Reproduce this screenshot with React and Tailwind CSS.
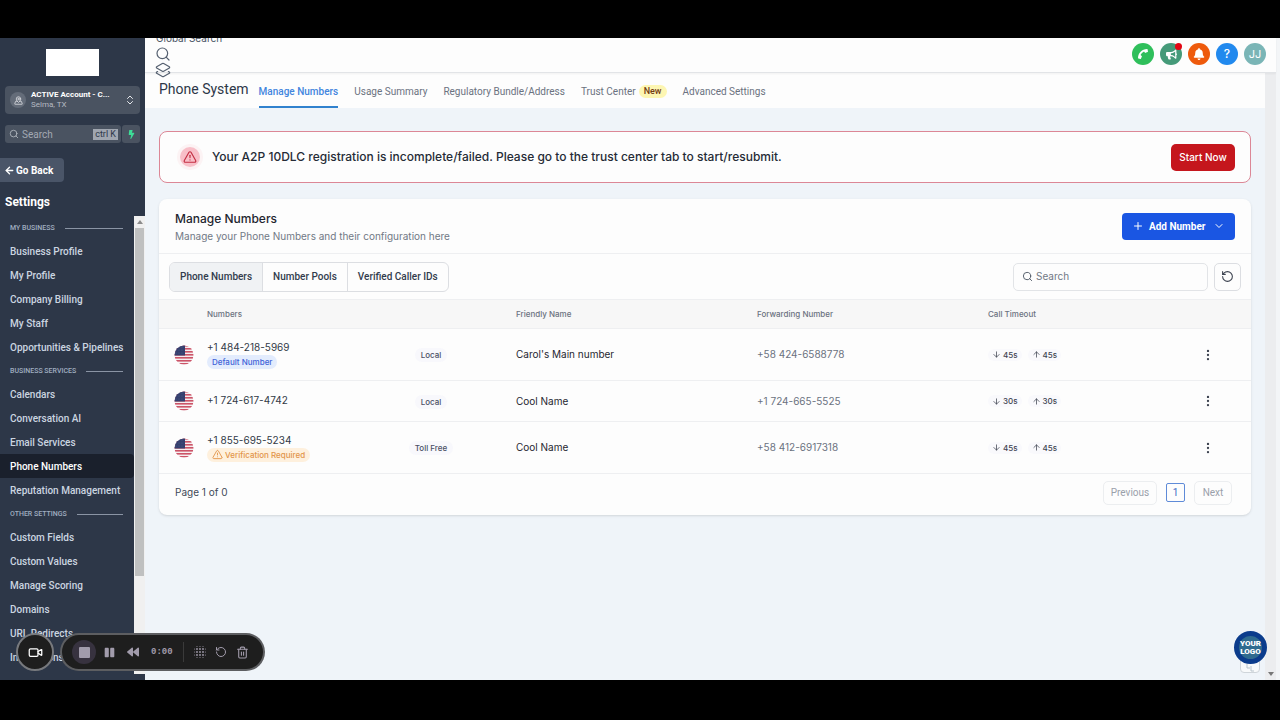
import {
  ArrowDown,
  ArrowLeft,
  ArrowUp,
  ChevronDown,
  ChevronsUpDown,
  EllipsisVertical,
  Layers2,
  MapPinned,
  Plus,
  RotateCcw,
  Search,
  Trash2,
  TriangleAlert,
  Video,
} from "lucide-react";
import { FaBackward, FaBell, FaBolt, FaBullhorn, FaPause, FaPhone } from "react-icons/fa";

const sections = [
  {
    title: "MY BUSINESS",
    items: ["Business Profile", "My Profile", "Company Billing", "My Staff", "Opportunities & Pipelines"],
  },
  {
    title: "BUSINESS SERVICES",
    items: ["Calendars", "Conversation AI", "Email Services", "Phone Numbers", "Reputation Management"],
  },
  {
    title: "OTHER SETTINGS",
    items: ["Custom Fields", "Custom Values", "Manage Scoring", "Domains", "URL Redirects", "Integrations"],
  },
];

const tabs = ["Manage Numbers", "Usage Summary", "Regulatory Bundle/Address", "Trust Center", "Advanced Settings"];

const numbers = [
  { id: 1, phone: "+1 484-218-5969", badge: "default", type: "Local", name: "Carol's Main number", forward: "+58 424-6588778", timeout: "45s", height: "h-[52px]" },
  { id: 2, phone: "+1 724-617-4742", badge: null, type: "Local", name: "Cool Name", forward: "+1 724-665-5525", timeout: "30s", height: "h-[41px]" },
  { id: 3, phone: "+1 855-695-5234", badge: "verify", type: "Toll Free", name: "Cool Name", forward: "+58 412-6917318", timeout: "45s", height: "h-[52px]" },
];

function Flag() {
  return (
    <svg viewBox="0 0 20 20" className="block size-5">
      <clipPath id="flagCircle">
        <circle cx="10" cy="10" r="9.5" />
      </clipPath>
      <g clipPath="url(#flagCircle)">
        <rect width="20" height="20" fill="#f6eef0" />
        {[0, 3, 6, 9, 12, 15, 18].map((y) => (
          <rect key={y} y={y} width="20" height="1.6" fill="#cc5468" />
        ))}
        <rect width="11" height="10.5" fill="#35406f" />
        {[2, 5, 8].map((y) =>
          [2, 5, 8].map((x) => <circle key={`${x}-${y}`} cx={x} cy={y} r="0.4" fill="#6d769e" />)
        )}
      </g>
    </svg>
  );
}

function Sidebar() {
  return (
    <aside className="flex w-[145px] shrink-0 flex-col overflow-hidden bg-[#2d3748] font-[Roboto,sans-serif]">
      <div className="mx-auto mt-[11px] h-[27px] w-[53px] shrink-0 bg-white" />

      {/* Account switcher */}
      <button className="mx-[5px] mt-[10px] flex h-7 shrink-0 items-center rounded-[4px] bg-[#4a5361] pr-1 pl-[5px] text-left">
        <span className="flex size-4 items-center justify-center rounded-full bg-[#646c79] text-gray-200">
          <MapPinned size={9} />
        </span>
        <span className="ml-[5px] flex-1 leading-[10px] whitespace-nowrap">
          <span className="block text-[8px] font-bold text-white">ACTIVE Account - C...</span>
          <span className="block text-[8px] text-[#b5bac2]">Selma, TX</span>
        </span>
        <ChevronsUpDown size={12} className="text-gray-200" />
      </button>

      {/* Quick search */}
      <div className="mx-[5px] mt-[11px] flex h-[18px] shrink-0 gap-px">
        <label className="flex min-w-0 flex-1 items-center rounded-[3px] bg-[#4a5361] pr-[3px] pl-1">
          <Search size={10} className="shrink-0 text-[#b5bac2]" />
          <input
            aria-label="Search menu"
            placeholder="Search"
            className="ml-[3px] w-full min-w-0 bg-transparent text-[10px] outline-none placeholder:text-[#a3a9b3]"
          />
          <kbd className="bg-[#a0a6b0] px-[2px] font-[Roboto,sans-serif] text-[9px] leading-[11px] whitespace-nowrap text-[#2d3748]">
            ctrl K
          </kbd>
        </label>
        <button aria-label="Quick actions" className="flex w-[18px] items-center justify-center rounded-[3px] bg-[#4a5361] text-[#3ddc97]">
          <FaBolt size={9} />
        </button>
      </div>

      <button className="mt-[15px] flex h-6 w-16 shrink-0 items-center gap-px rounded-r-[4px] bg-[#4a5568] pl-1 text-[10px] font-bold text-white">
        <ArrowLeft size={11} strokeWidth={3} />
        Go Back
      </button>

      <h2 className="mt-3 ml-[5px] shrink-0 text-[12px] leading-4 font-bold text-white">Settings</h2>

      <div className="mt-[6px] mb-[6px] flex min-h-0 flex-1">
        <nav className="flex-1 overflow-hidden">
          {sections.map((section) => (
            <div key={section.title}>
              <div className="flex h-[23px] items-center pt-[2px] pr-[11px] pl-[10px]">
                <span className="text-[7px] font-medium text-[#a0aec0]">{section.title}</span>
                <span className="ml-[10px] h-px flex-1 bg-[#8a94a4]" />
              </div>
              {section.items.map((item) => (
                <a
                  key={item}
                  href="#"
                  className={
                    item === "Phone Numbers"
                      ? "flex h-6 items-center rounded-r-[4px] bg-[#1a202c] pl-[10px] text-[10px] font-medium text-white"
                      : "flex h-6 items-center pl-[10px] text-[10px] font-medium whitespace-nowrap text-[#cbd5e0]"
                  }
                >
                  {item}
                </a>
              ))}
            </div>
          ))}
        </nav>
        {/* Scroll track */}
        <div className="flex w-[11px] flex-col items-center bg-[#f0f0f0]">
          <div className="flex h-3 items-center">
            <svg viewBox="0 0 6 4" className="h-1 w-[6px]">
              <path d="M0 4 3 0l3 4z" fill="#8b8b8b" />
            </svg>
          </div>
          <div className="h-[76%] w-[9px] bg-[#bfc0c0]" />
        </div>
      </div>
    </aside>
  );
}

function TopBar() {
  return (
    <header className="relative z-10 mr-1 flex h-[35px] shrink-0 items-start justify-between border-b border-[#e2e4e7] bg-[#fdfdfd] pr-[10px] pl-[11px] shadow-xs">
      <div className="-mt-2 text-[#556070]">
        <p className="text-[10px] leading-4 text-gray-600">Global Search</p>
        <Search size={16} strokeWidth={1.8} className="-ml-px" />
        <Layers2 size={16} strokeWidth={1.8} className="-ml-px" />
      </div>
      <div className="flex gap-[6px] pt-[5px] text-white">
        <button aria-label="Call" className="flex size-[22px] items-center justify-center rounded-full bg-[#2fbf5b]">
          <FaPhone size={10} className="rotate-180" />
        </button>
        <button aria-label="Announcements" className="relative flex size-[22px] items-center justify-center rounded-full bg-[#459a79]">
          <FaBullhorn size={11} />
          <span className="absolute top-0 right-0 size-[7px] rounded-full bg-[#e30613]" />
        </button>
        <button aria-label="Notifications" className="flex size-[22px] items-center justify-center rounded-full bg-[#ee5a0c]">
          <FaBell size={12} />
        </button>
        <button aria-label="Help" className="flex size-[22px] items-center justify-center rounded-full bg-[#2189ee] text-[12px] font-medium">
          ?
        </button>
        <button aria-label="Profile" className="flex size-[22px] items-center justify-center rounded-full bg-[#7ab5b6] text-[11px]">
          JJ
        </button>
      </div>
    </header>
  );
}

function PageTabs() {
  return (
    <div className="flex h-[35px] shrink-0 bg-[#fdfdfd] pl-[14px] font-[Roboto,sans-serif]">
      <h1 className="pt-[6px] text-[14px] leading-5 text-[#2d3748]">Phone System</h1>
      <nav className="ml-[10px] flex gap-4">
        {tabs.map((tab) => (
          <a
            key={tab}
            href="#"
            className={
              tab === "Manage Numbers"
                ? "flex items-center border-b-2 border-[#3182ce] pt-1 text-[10px] font-medium text-[#4285de]"
                : "flex items-center border-b-2 border-transparent pt-1 text-[10px] text-[#6b7280]"
            }
          >
            {tab}
            {tab === "Trust Center" && (
              <span className="ml-[3px] rounded-full bg-[#fdf6b2] px-[5px] text-[9px] leading-[13px] font-medium text-[#723b13]">New</span>
            )}
          </a>
        ))}
      </nav>
    </div>
  );
}

function Alert() {
  return (
    <div className="flex h-[52px] items-center rounded-[8px] border border-[#dc8796] bg-[#fdfdfd] pr-[15px] pl-[17px]">
      <span className="flex size-[26px] items-center justify-center rounded-full bg-[#fcf3f4]">
        <span className="flex size-5 items-center justify-center rounded-full bg-[#f8bfc8] text-[#c32e42]">
          <TriangleAlert size={14} />
        </span>
      </span>
      <p className="ml-[9px] flex-1 text-[12px] font-medium text-[#252b36]">
        Your A2P 10DLC registration is incomplete/failed. Please go to the trust center tab to start/resubmit.
      </p>
      <button className="h-[27px] w-16 rounded-[5px] bg-[#c5161d] text-[10px] font-medium text-white">Start Now</button>
    </div>
  );
}

function NumbersTable() {
  return (
    <table className="w-full table-fixed text-left text-[10px] text-[#323a46]">
      <colgroup>
        <col className="w-[48px]" />
        <col className="w-[139px]" />
        <col className="w-[170px]" />
        <col className="w-[241px]" />
        <col className="w-[231px]" />
        <col className="w-[177px]" />
        <col className="w-[86px]" />
      </colgroup>
      <thead>
        <tr className="h-[29px] border-y border-[#eeeff1] bg-[#f7f7f7] text-[8px] text-[#6b7280]">
          <th />
          <th className="font-medium">Numbers</th>
          <th />
          <th className="font-medium">Friendly Name</th>
          <th className="font-medium">Forwarding Number</th>
          <th className="font-medium">Call Timeout</th>
          <th />
        </tr>
      </thead>
      <tbody>
        {numbers.map((row) => (
          <tr key={row.id} className={`${row.height} border-b border-[#eeeff1]`}>
            <td className="pl-[15px]">
              <Flag />
            </td>
            <td className="pb-[2px] whitespace-nowrap">
              <div className="leading-[16px]">{row.phone}</div>
              {row.badge === "default" && (
                <span className="flex w-fit items-center rounded-full bg-[#e3ecfd] px-[5px] text-[8px] leading-[14px] font-medium text-[#3f62d8]">
                  Default Number
                </span>
              )}
              {row.badge === "verify" && (
                <span className="flex w-fit items-center gap-[2px] rounded-full bg-[#fef0dd] px-[5px] text-[8px] leading-[14px] font-medium text-[#e2954a]">
                  <TriangleAlert size={11} />
                  Verification Required
                </span>
              )}
            </td>
            <td className="text-center">
              <span className="rounded-full bg-[#f8f8fc] px-[6px] py-[2px] text-[8px] font-medium text-[#4b5065]">{row.type}</span>
            </td>
            <td className="text-[#1f2630]">{row.name}</td>
            <td className="text-[#6b7280]">{row.forward}</td>
            <td>
              <div className="flex gap-[6px] text-[8px] font-medium text-[#3d4350]">
                <span className="flex items-center gap-[2px] rounded-full bg-[#f9f9fc] px-1">
                  <ArrowDown size={9} />
                  {row.timeout}
                </span>
                <span className="flex items-center gap-[2px] rounded-full bg-[#f9f9fc] px-1">
                  <ArrowUp size={9} />
                  {row.timeout}
                </span>
              </div>
            </td>
            <td>
              <button aria-label="Row actions" className="mx-auto block text-[#3d4350]">
                <EllipsisVertical size={14} />
              </button>
            </td>
          </tr>
        ))}
      </tbody>
    </table>
  );
}

function NumbersCard() {
  return (
    <section className="mt-4 rounded-[8px] bg-[#fdfdfd] pb-1 shadow-sm">
      <div className="flex h-[55px] items-center justify-between border-b border-[#eeeff1] px-4">
        <div className="pt-[2px]">
          <h2 className="text-[12px] leading-[18px] font-medium text-[#1f2630]">Manage Numbers</h2>
          <p className="text-[10px] leading-4 text-[#717985]">Manage your Phone Numbers and their configuration here</p>
        </div>
        <button className="flex h-[27px] w-[113px] items-center rounded-[4px] bg-[#1a56e3] px-[10px] font-[Roboto,sans-serif] text-[10px] font-bold text-white">
          <Plus size={12} />
          <span className="ml-[5px]">Add Number</span>
          <ChevronDown size={12} className="ml-auto" />
        </button>
      </div>

      <div className="flex h-[45px] items-center px-[10px]">
        <div className="flex h-[30px] divide-x divide-[#dcdee2] overflow-hidden rounded-[6px] border border-[#dcdee2] font-[Roboto,sans-serif] text-[10px] font-medium text-[#323c4d]">
          <button className="bg-[#f0f2f4] px-[10px]">Phone Numbers</button>
          <button className="px-[10px]">Number Pools</button>
          <button className="px-[10px]">Verified Caller IDs</button>
        </div>
        <label className="ml-auto flex h-7 w-[195px] items-center rounded-[5px] border border-[#e2e4e7] px-2">
          <Search size={11} className="shrink-0 text-[#4b5563]" />
          <input
            aria-label="Search numbers"
            placeholder="Search"
            className="ml-[3px] w-full min-w-0 bg-transparent text-[10px] outline-none placeholder:text-[#717985]"
          />
        </label>
        <button aria-label="Refresh" className="ml-[6px] flex h-7 w-[27px] items-center justify-center rounded-[5px] border border-[#dcdee2] text-[#3d4350]">
          <RotateCcw size={13} />
        </button>
      </div>

      <NumbersTable />

      <div className="flex h-[37px] items-center justify-between pr-[19px] pl-4 text-[10px] text-[#414957]">
        <span>Page 1 of 0</span>
        <div className="flex items-center gap-[9px] font-[Roboto,sans-serif] text-[#9aa0aa]">
          <button className="h-6 w-[54px] rounded-[5px] border border-[#eceef0]">Previous</button>
          <button className="size-[19px] rounded-[2px] border border-[#5f8bd8] text-[#3f6bc4]">1</button>
          <button className="h-6 w-[38px] rounded-[5px] border border-[#eceef0]">Next</button>
        </div>
      </div>
    </section>
  );
}

// Floating screen recorder controls
function Recorder() {
  return (
    <div className="absolute bottom-[9px] left-4 z-20 flex gap-[6px]">
      <button aria-label="Camera" className="flex size-[38px] items-center justify-center rounded-full border-2 border-[#77797d] bg-[#1e1e1e] text-white">
        <Video size={15} />
      </button>
      <div className="flex h-[38px] items-center rounded-full border-2 border-[#77797d]/70 bg-[#1e1e1e] pr-[14px] pl-[10px] text-[#a29cac]">
        <button aria-label="Stop" className="flex size-6 items-center justify-center rounded-full bg-[#37323f]">
          <span className="size-[11px] rounded-[1px] bg-[#a29cac]" />
        </button>
        <button aria-label="Pause" className="ml-2">
          <FaPause size={11} />
        </button>
        <button aria-label="Rewind" className="ml-3">
          <FaBackward size={12} />
        </button>
        <span className="ml-3 pt-[2px] font-['Liberation_Mono',monospace] text-[9px] font-bold">0:00</span>
        <span className="mx-[10px] h-5 w-px bg-[#3a3a3a]" />
        <button aria-label="Blur">
          <svg viewBox="0 0 12 12" className="block size-3" fill="currentColor">
            {[3, 6, 9].map((y) =>
              [3, 6, 9].map((x) => <circle key={`${x}-${y}`} cx={x} cy={y} r="0.9" />)
            )}
            {[3, 6, 9].map((p) => (
              <g key={p}>
                <circle cx={p} cy="0.6" r="0.5" />
                <circle cx={p} cy="11.4" r="0.5" />
                <circle cx="0.6" cy={p} r="0.5" />
                <circle cx="11.4" cy={p} r="0.5" />
              </g>
            ))}
          </svg>
        </button>
        <button aria-label="Restart" className="ml-[9px]">
          <RotateCcw size={12} />
        </button>
        <button aria-label="Delete" className="ml-[9px]">
          <Trash2 size={13} />
        </button>
      </div>
    </div>
  );
}

export default function App() {
  return (
    <div className="h-screen bg-black pt-[38px] pb-10 font-[Inter,sans-serif]">
      <div className="relative flex h-full overflow-hidden bg-[#f3f5f7]">
        <Sidebar />

        <div className="flex min-w-0 flex-1 flex-col">
          <TopBar />
          <div className="flex min-h-0 flex-1">
            <main className="min-w-0 flex-1 bg-[#eff4f9]">
              <PageTabs />
              <div className="pt-[23px] pr-[14px] pl-[14px]">
                <Alert />
                <NumbersCard />
              </div>
            </main>
            <div className="w-[11px] bg-[#ecedef]" />
            <div className="w-1" />
          </div>
        </div>

        <Recorder />

        {/* Chat widget */}
        <div className="absolute right-5 bottom-[7px] flex size-5 items-end justify-center rounded-[4px] border border-[#cfd5da] bg-[#f8fafb]">
          <svg viewBox="0 0 10 8" className="h-2 w-[10px]" fill="none" stroke="#b9c4cd">
            <path d="M2 0v4h3M6 2v5h3" />
          </svg>
        </div>
        <button className="absolute right-[13px] bottom-4 flex size-[33px] items-center justify-center rounded-full border-[5px] border-[#0b3c8c] bg-[#2f6b8f] font-[Roboto,sans-serif] text-[8px] leading-[8px] font-black text-white">
          YOUR LOGO
        </button>
        <svg viewBox="0 0 6 4" className="absolute right-[6px] bottom-1 h-1 w-[6px]">
          <path d="M0 0h6L3 4z" fill="#777" />
        </svg>
      </div>
    </div>
  );
}
